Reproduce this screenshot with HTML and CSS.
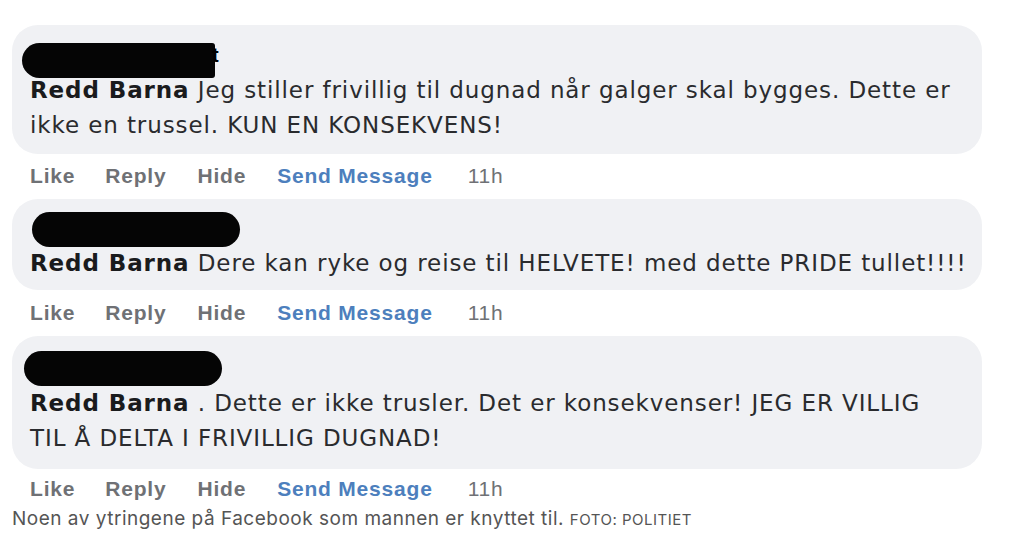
FILE: index.html
```html
<!DOCTYPE html>
<html lang="no">
<head>
<meta charset="utf-8">
<title>Kommentarer</title>
<link rel="stylesheet" href="styles.css">
</head>
<body>
<div class="page">
  <div class="comment c1">
    <div class="bubble">
      <div class="redact-row"><div class="redact r1"></div><span class="frag">t</span></div>
      <p class="text"><b>Redd Barna</b> Jeg stiller frivillig til dugnad når galger skal bygges. Dette er<br>ikke en trussel. KUN EN KONSEKVENS!</p>
    </div>
    <div class="actions"><span class="a like">Like</span><span class="a reply">Reply</span><span class="a hide">Hide</span><span class="a send">Send Message</span><span class="time">11h</span></div>
  </div>
  <div class="comment c2">
    <div class="bubble">
      <div class="redact-row"><div class="redact r2"></div></div>
      <p class="text"><b>Redd Barna</b> Dere kan ryke og reise til HELVETE! med dette PRIDE tullet!!!!</p>
    </div>
    <div class="actions"><span class="a like">Like</span><span class="a reply">Reply</span><span class="a hide">Hide</span><span class="a send">Send Message</span><span class="time">11h</span></div>
  </div>
  <div class="comment c3">
    <div class="bubble">
      <div class="redact-row"><div class="redact r3"></div></div>
      <p class="text"><b>Redd Barna</b> . Dette er ikke trusler. Det er konsekvenser! JEG ER VILLIG<br>TIL Å DELTA I FRIVILLIG DUGNAD!</p>
    </div>
    <div class="actions"><span class="a like">Like</span><span class="a reply">Reply</span><span class="a hide">Hide</span><span class="a send">Send Message</span><span class="time">11h</span></div>
  </div>
  <p class="caption">Noen av ytringene på Facebook som mannen er knyttet til. <span class="credit">FOTO: POLITIET</span></p>
</div>
</body>
</html>
```
FILE: styles.css
```css
* { box-sizing: border-box; }
html, body { margin: 0; padding: 0; background: #ffffff; }
body { width: 1016px; height: 557px; overflow: hidden; }
.page { padding: 25px 0 0 12px; font-family: "Liberation Sans", Arial, sans-serif; }
.bubble {
  width: 970px;
  background: #f0f1f4;
  border-radius: 26px;
  padding: 18px 0 11px 18px;
}
.redact-row { display: flex; align-items: flex-start; height: 35px; }
.redact { background: #050505; height: 35px; border-radius: 18px; }
.r1 { width: 193px; margin-left: -8px; border-radius: 18px 3px 3px 18px; }
.frag { font-size: 20px; line-height: 20px; color: #000000; margin-left: -3px; margin-top: 2px; font-weight: bold; }
.r2 { width: 208px; margin-left: 2px; }
.r3 { width: 198px; margin-left: -6px; }
.text {
  margin: -5px 0 0 0;
  font-family: "DejaVu Sans", "Liberation Sans", sans-serif;
  font-size: 23px;
  letter-spacing: 0.9px;
  line-height: 35px;
  color: #2a2b2e;
}
.text b { color: #1a1b1d; }
.actions {
  display: flex;
  padding-left: 18px;
  margin-top: 10px;
  font-size: 21px;
  letter-spacing: 0.8px;
  line-height: 24px;
  height: 24px;
}
.a { font-weight: bold; color: #6f7175; }
.like { margin-right: 30px; }
.reply { margin-right: 31px; }
.hide { margin-right: 31px; }
.send { color: #4d7fbd; margin-right: 35px; }
.time { color: #6f7175; }
.c2 { margin-top: 11px; }
.c2 .bubble { padding-top: 13px; padding-bottom: 9px; }
.c2 .text { margin-top: -1px; }
.c2 .actions { margin-top: 11px; }
.c3 { margin-top: 11px; }
.c3 .bubble { padding-top: 15px; padding-bottom: 13px; }
.c3 .text { margin-top: 0; }
.c3 .actions { margin-top: 8px; }
.caption {
  margin: 6px 0 0 0;
  font-family: Inter, "Liberation Sans", sans-serif;
  font-size: 19px;
  letter-spacing: 0.5px;
  line-height: 24px;
  color: #555555;
}
.credit { font-size: 15px; text-transform: uppercase; color: #555555; }
```
